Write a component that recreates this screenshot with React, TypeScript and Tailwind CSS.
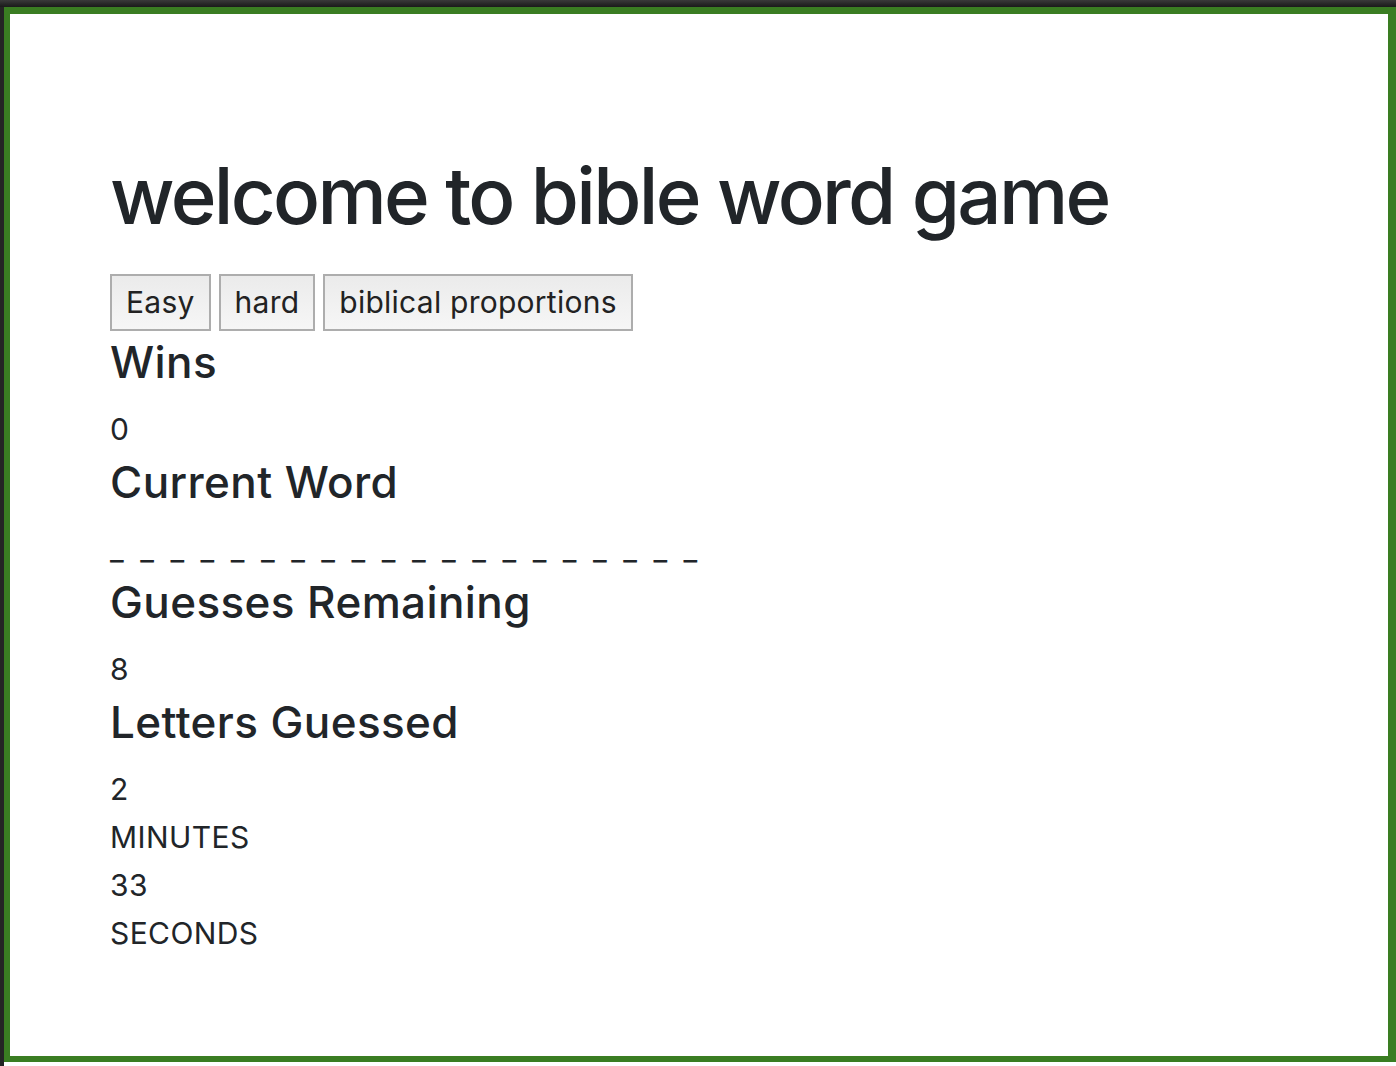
const levels = ['Easy', 'hard', 'biblical proportions'];
const blanks = Array.from({ length: 20 }, (_, i) => i);

function Heading({ children }: { children: string }) {
  return (
    <h3 className="pt-[3px] pb-[16px] text-[44px] leading-[53px] font-medium tracking-[0.4px]">
      {children}
    </h3>
  );
}

function Line({ children }: { children: string }) {
  return <p className="text-[30px] leading-[48px] tracking-[0.4px]">{children}</p>;
}

export default function App() {
  return (
    <div className="flex h-[1066px] w-[1396px] flex-col bg-white font-['Inter','Liberation_Sans',sans-serif] text-[#212529]">
      <div className="h-[7px] bg-linear-to-b from-[#3a3a3a] to-[#1a1a1a]" />
      <div className="flex flex-1">
        <div className="w-[4px] bg-[#242424]" />
        <div className="flex flex-1 flex-col">
          <div className="h-[1055px] border-t-[7px] border-r-[8px] border-b-[6px] border-l-[6px] border-[#3a7d22] bg-white pt-[135px] pl-[100px]">
            <h1 className="text-[78px] leading-[94px] font-medium tracking-[-2.7px]">
              welcome to bible word game
            </h1>

            <div className="mt-[31px] flex gap-[8px]">
              {levels.map((level) => (
                <button
                  key={level}
                  className="flex h-[57px] items-center border-2 border-[#adadad] bg-linear-to-b from-[#ebebeb] to-[#f6f6f6] px-[14px] text-[30px] tracking-[0.25px] text-[#222]"
                >
                  {level}
                </button>
              ))}
            </div>

            <div className="mt-[2px]">
              <Heading>Wins</Heading>
              <Line>0</Line>
              <Heading>Current Word</Heading>
              <div className="flex h-[48px] text-[30px] leading-[48px]">
                {blanks.map((i) => (
                  <span key={i} className="w-[30.2px] shrink-0">_</span>
                ))}
              </div>
              <Heading>Guesses Remaining</Heading>
              <Line>8</Line>
              <Heading>Letters Guessed</Heading>
              <Line>2</Line>
              <Line>MINUTES</Line>
              <Line>33</Line>
              <Line>SECONDS</Line>
            </div>
          </div>
          <div className="flex-1 bg-white" />
        </div>
      </div>
    </div>
  );
}
